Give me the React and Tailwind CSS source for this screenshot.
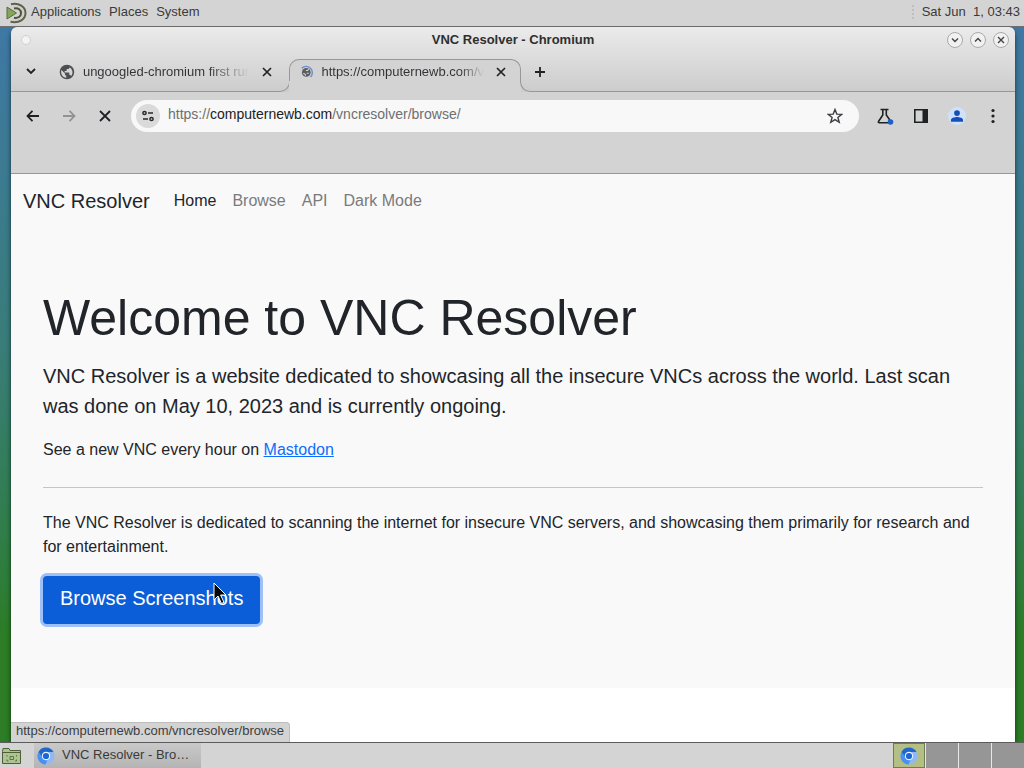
const MateLogo = () => (
  <svg width="22" height="22" viewBox="0 0 22 22" fill="none">
    <path d="M1 5 10.500 11 1 17Z" fill="#87a556" stroke="#5d6d40" strokeWidth="1" />
    <path d="M5 2.200C13 .4 19.500 5 19.500 11S13.500 21.500 4.500 19.800" stroke="#5d6248" strokeWidth="2" />
    <path d="M8 6.500C12.500 5.500 15 8 15 11.200S12 16.500 8 15.800" stroke="#4d5140" strokeWidth="2" />
    <path d="M7 4.400C13 3 17.300 6.500 17.300 11.200S13 19 7 17.900" stroke="#c8d0b8" strokeWidth="1" />
  </svg>
);

const ChromiumLogo = () => (
  <svg width="18" height="18" viewBox="0 0 18 18">
    <circle cx="9" cy="9" r="8.500" fill="#8fb8f5" />
    <path d="M1.500 4.900A8.500 8.500 0 0 1 16.500 5H9A4 4 0 0 0 5.500 11Z" fill="#2166c9" />
    <path d="M1.500 4.900 5.500 11A4 4 0 0 0 10.500 12.700L8.500 17.500A8.500 8.500 0 0 1 1.500 4.900Z" fill="#4a90f0" />
    <circle cx="9" cy="9" r="4.200" fill="#eaf3ff" />
    <circle cx="9" cy="9" r="3.100" fill="#1b66d2" />
  </svg>
);

const Globe = () => (
  <svg width="16" height="16" viewBox="0 0 24 24" fill="#4d5053">
    <path d="M12 1a11 11 0 1 0 0 22 11 11 0 0 0 0-22ZM3.200 12c0-1 .2-2 .5-2.900L9 14.200v1.300c0 1.100.9 2 2 2v3.200A8.800 8.800 0 0 1 3.200 12Zm15.300 6a2 2 0 0 0-1.900-1.400h-1v-3c0-.6-.4-1-1-1h-6v-2h2c.6 0 1-.4 1-1v-2h2c1.100 0 2-.9 2-2v-.8A8.800 8.800 0 0 1 18.500 18Z" />
  </svg>
);

const LoadingGlobe = () => (
  <svg width="14" height="14" viewBox="0 0 16 16" fill="none">
    <circle cx="7.500" cy="8.500" r="5.200" fill="#5a5d61" />
    <path d="M4 9.500 6.500 11v1.500M7 6.200h2l1.500-1.500M8 9.500h2.500" stroke="#d3d3d3" strokeWidth="1.300" />
    <path d="M2 3.500A7.200 7.200 0 1 1 12.500 14" stroke="#6f8fc9" strokeWidth="1.700" />
  </svg>
);

const Cross = () => (
  <svg width="10" height="10" viewBox="0 0 10 10" stroke="#1f2124" strokeWidth="1.700">
    <path d="m1 1 8 8M9 1 1 9" />
  </svg>
);

const Arrow = ({ flipped }) => (
  <svg width="14" height="14" viewBox="0 0 14 14" fill="none" stroke={flipped ? "#909294" : "#1f2124"} strokeWidth="1.800">
    {flipped ? <path d="M1 7h11M7.500 1.800 12.500 7 7.500 12.200" /> : <path d="M13 7H2M6.500 1.800 1.500 7 6.500 12.200" />}
  </svg>
);

function ToolButton({ label, children }) {
  return (
    <button type="button" aria-label={label} className="flex size-7 items-center justify-center rounded-full">
      {children}
    </button>
  );
}

function WindowButton({ label, path }) {
  return (
    <button type="button" aria-label={label} className="flex size-4 items-center justify-center rounded-full border border-[#a9a9a9] bg-[#f1f1f1]">
      <svg width="8" height="8" viewBox="0 0 8 8" fill="none" stroke="#424242" strokeWidth="1.400">
        <path d={path} />
      </svg>
    </button>
  );
}

function TopPanel() {
  return (
    <header className="flex h-[27px] items-center justify-between border-b border-[#6f6f6f] bg-[#d4d4d4] px-1 text-[13px] text-[#3a3a3a]">
      <nav className="flex items-center gap-2 pl-0.5">
        <button type="button" className="flex items-center gap-[3px]">
          <MateLogo />
          <span className="pb-0.5">Applications</span>
        </button>
        <button type="button" className="pb-0.5">Places</button>
        <button type="button" className="pb-0.5">System</button>
      </nav>
      <div className="flex items-center gap-2">
        <svg width="2" height="16" viewBox="0 0 2 16" fill="#bebebe">
          <path d="M0 0h2v2H0zM0 4h2v2H0zM0 8h2v2H0zM0 12h2v2H0z" />
        </svg>
        <time className="pb-0.5 whitespace-pre">Sat Jun  1, 03:43</time>
      </div>
    </header>
  );
}

function TitleBar() {
  return (
    <div className="flex h-6 items-center justify-between px-1.5">
      <div className="flex w-16 pl-1">
        <span className="size-2.5 rounded-full border border-[#cfcfcf] bg-[#f3f3f3]" />
      </div>
      <h2 className="text-[13px] font-bold text-[#2f2f2f]">VNC Resolver - Chromium</h2>
      <div className="flex w-16 justify-end gap-[7px]">
        <WindowButton label="Minimize" path="M1 2.500 4 5.500 7 2.500" />
        <WindowButton label="Maximize" path="M1 5.500 4 2.500 7 5.500" />
        <WindowButton label="Close" path="m1 1 6 6M7 1 1 7" />
      </div>
    </div>
  );
}

function TabStrip() {
  return (
    <div className="flex h-10 items-stretch">
      <div className="flex w-[42px] items-center border-b border-[#979797] pl-1.5">
        <ToolButton label="Search tabs">
          <svg width="10" height="7" viewBox="0 0 10 7" fill="none" stroke="#1f2124" strokeWidth="1.800">
            <path d="m1 1 4 4 4-4" />
          </svg>
        </ToolButton>
      </div>
      <div className="flex w-[225px] items-center gap-2 border-b border-[#979797] pr-0.5 pl-1.5">
        <Globe />
        <span className="w-[168px] overflow-hidden bg-linear-to-r from-[#303235] from-75% to-transparent bg-clip-text text-[13px] whitespace-nowrap text-transparent">
          ungoogled-chromium first run
        </span>
        <button type="button" aria-label="Close first tab" className="ml-auto p-1"><Cross /></button>
      </div>
      <span className="mt-5 w-3 rounded-br-[10px] border-r border-b border-[#979797]" />
      <div className="mt-[7px] -mb-px -ml-px flex w-[232px] flex-col">
        <div className="flex h-[22px] items-center gap-2 rounded-t-[10px] border border-b-0 border-[#979797] bg-[#d3d3d3] pt-[3px] pr-2.5 pl-2.5">
          <LoadingGlobe />
          <span className="bg-linear-to-r from-[#303235] from-85% to-transparent bg-clip-text text-[13px] whitespace-nowrap text-transparent">
            https://computernewb.com/v
          </span>
          <button type="button" aria-label="Close tab" className="ml-auto p-1"><Cross /></button>
        </div>
        <div className="flex-1 bg-[#d3d3d3]" />
      </div>
      <span className="mt-5 -ml-px w-3 rounded-bl-[10px] border-b border-l border-[#979797]" />
      <div className="flex flex-1 items-center border-b border-[#979797]">
        <button type="button" aria-label="New tab" className="p-0.5">
          <svg width="12" height="12" viewBox="0 0 12 12" stroke="#1f2124" strokeWidth="1.800">
            <path d="M6 1v10M1 6h10" />
          </svg>
        </button>
      </div>
    </div>
  );
}

function Toolbar() {
  return (
    <div className="flex h-[82px] items-start border-b border-[#979797] bg-[#d3d3d3] px-2 pt-2">
      <div className="flex h-8 items-center gap-2">
        <ToolButton label="Back"><Arrow /></ToolButton>
        <ToolButton label="Forward"><Arrow flipped /></ToolButton>
        <ToolButton label="Stop">
          <svg width="12" height="12" viewBox="0 0 12 12" stroke="#1f2124" strokeWidth="1.800"><path d="m1 1 10 10M11 1 1 11" /></svg>
        </ToolButton>
      </div>
      <div className="mr-3 ml-3 flex h-8 flex-1 items-center gap-2 rounded-full bg-[#f8f8f8] pr-2.5 pl-[5px]">
        <button type="button" aria-label="Site information" className="flex size-6 items-center justify-center rounded-full bg-[#dadada]">
          <svg width="14" height="12" viewBox="0 0 14 12" fill="none" stroke="#26282b" strokeWidth="1.500">
            <circle cx="3.500" cy="3" r="1.600" />
            <path d="M7 3h5M2 9h5" />
            <circle cx="10.500" cy="9" r="1.600" />
          </svg>
        </button>
        <div role="textbox" aria-label="Address" tabIndex={0} className="flex-1 pb-1 text-[14px] text-[#6d6f71]">
          https://<span className="text-[#202124]">computernewb.com</span>/vncresolver/browse/
        </div>
        <ToolButton label="Bookmark this page">
          <svg width="16" height="16" viewBox="0 0 16 16" fill="none" stroke="#3b3d40" strokeWidth="1.400">
            <path d="m8 1.500 1.800 4.600 4.900.3-3.800 3.100 1.300 4.800L8 11.600l-4.200 2.700 1.300-4.800L1.300 6.400l4.900-.3Z" />
          </svg>
        </ToolButton>
      </div>
      <div className="flex h-8 items-center gap-2">
        <ToolButton label="Experiments">
          <svg width="18" height="18" viewBox="0 0 18 18" fill="none" stroke="#1f2124" strokeWidth="1.600">
            <path d="M4.500 2.500h8M6.800 2.500v5.500L2.500 14.500c-.4.700 0 1.200.7 1.200H13M10.300 2.500v5.500l3.500 5" />
            <circle cx="14.500" cy="15" r="2.800" fill="#1b5fc8" stroke="none" />
          </svg>
        </ToolButton>
        <ToolButton label="Side panel">
          <svg width="16" height="16" viewBox="0 0 16 16">
            <path d="M1.800 1.800h12.400v12.400H1.800Z" fill="none" stroke="#1f2124" strokeWidth="1.600" />
            <path d="M9.500 1H15v14H9.500Z" fill="#1f2124" />
          </svg>
        </ToolButton>
        <ToolButton label="Profile">
          <svg width="18" height="18" viewBox="0 0 20 20">
            <circle cx="10" cy="10" r="10" fill="#cfe2fb" />
            <circle cx="10" cy="6.800" r="3.200" fill="#1550b8" />
            <path d="M3.300 16.500v-2.200c0-2.300 4-3.300 6.700-3.300s6.700 1 6.700 3.300v2.200Z" fill="#1550b8" />
          </svg>
        </ToolButton>
        <ToolButton label="Menu">
          <svg width="4" height="16" viewBox="0 0 4 16" fill="#1f2124">
            <circle cx="2" cy="2.500" r="1.600" /><circle cx="2" cy="8" r="1.600" /><circle cx="2" cy="13.500" r="1.600" />
          </svg>
        </ToolButton>
      </div>
    </div>
  );
}

function Page() {
  return (
    <div className="relative flex-1 bg-white text-[#212529]">
      <div className="bg-[#f9f9fa]">
        <nav className="flex h-[53px] items-center gap-4 pl-3 text-base text-[#7a7b7c]">
          <a href="#top" className="mr-2 text-xl text-[#212529]">VNC Resolver</a>
          <a href="#home" className="text-[#212529]">Home</a>
          <a href="#browse">Browse</a>
          <a href="#api">API</a>
          <a href="#dark">Dark Mode</a>
        </nav>
        <main className="px-8 pt-[61px] pb-16">
          <h1 className="text-[50px] leading-[60px]">Welcome to VNC Resolver</h1>
          <p className="mt-[13px] text-xl leading-[30px]">
            VNC Resolver is a website dedicated to showcasing all the insecure VNCs across the world. Last scan was done on May 10, 2023 and is currently ongoing.
          </p>
          <p className="mt-[17px] text-base">
            See a new VNC every hour on <a href="#mastodon" className="text-[#0d6efd] underline">Mastodon</a>
          </p>
          <hr className="mt-[25px] mb-[23px] border-[#c4c5c6]" />
          <p className="text-base">
            The VNC Resolver is dedicated to scanning the internet for insecure VNC servers, and showcasing them primarily for research and for entertainment.
          </p>
          <div className="mt-[17px] flex">
            <button type="button" className="relative h-12 rounded-sm bg-[#0b5ed7] px-[17px] pb-1 text-xl text-white ring-3 ring-[#9dc0f8]">
              Browse Screenshots
              <svg className="absolute top-1.5 left-[170px]" width="14" height="23" viewBox="0 0 14 23">
                <path d="M1 1v17l4-4 3.500 7.500 2.500-1.200L7.600 13H13Z" fill="#080808" stroke="#fff" strokeWidth="1" />
              </svg>
            </button>
          </div>
        </main>
      </div>
      <div className="absolute bottom-0 left-0 rounded-tr-sm border-t border-r border-[#bdbdbd] bg-[#d3d3d3] px-[5px] pb-1 text-[13px] leading-[15px] text-[#3c3e40]">
        https://computernewb.com/vncresolver/browse
      </div>
    </div>
  );
}

function Taskbar() {
  return (
    <footer className="flex h-[26px] items-stretch border-t border-[#5c5c5c] bg-[#d4d4d4] text-[13px] text-[#3a3a3a]">
      <button type="button" aria-label="Show desktop" className="flex w-[34px] items-center pl-0.5">
        <svg width="20" height="18" viewBox="0 0 20 18" fill="none" stroke="#4c5f37">
          <path d="M1 1.500h6l1 2h10.500v13h-18v-12Z" fill="#adc392" />
          <path d="M1 5.500h17.500" />
          <path d="M5 8v1.500M5 12.500V14h1.500M13 14h1.500v-1.500M14.500 9.500V8M8 9.500h3.500v3H8Z" stroke="#5e7542" />
        </svg>
      </button>
      <button type="button" className="flex w-[167px] items-center gap-[7px] bg-linear-to-b from-[#c9c9c9] to-[#b4b4b4] pl-[3px]">
        <ChromiumLogo />
        <span className="pb-0.5">VNC Resolver - Bro…</span>
      </button>
      <div className="ml-auto grid w-[131px] grid-cols-4 gap-px bg-[#e8e8e8]">
        <button type="button" aria-label="Workspace 1" className="flex items-center justify-center border border-[#707b53] bg-[#b3bf83]"><ChromiumLogo /></button>
        <button type="button" aria-label="Workspace 2" className="bg-[#969696]" />
        <button type="button" aria-label="Workspace 3" className="bg-[#969696]" />
        <button type="button" aria-label="Workspace 4" className="bg-[#969696]" />
      </div>
    </footer>
  );
}

export default function App() {
  return (
    <div className="flex min-h-screen flex-col font-['Liberation_Sans',Arial,sans-serif]">
      <TopPanel />
      <div className="flex flex-1 bg-linear-to-b from-[#3f78a5] via-[#397d78] via-45% to-[#2c7d25] to-85% pr-[9px] pl-[11px]">
        <section className="flex flex-1 flex-col overflow-hidden rounded-t-md shadow-md shadow-black/60">
          <div className="bg-linear-to-b from-[#ebebeb] to-[#cccccc] pt-px">
            <TitleBar />
            <TabStrip />
          </div>
          <Toolbar />
          <Page />
        </section>
      </div>
      <Taskbar />
    </div>
  );
}
